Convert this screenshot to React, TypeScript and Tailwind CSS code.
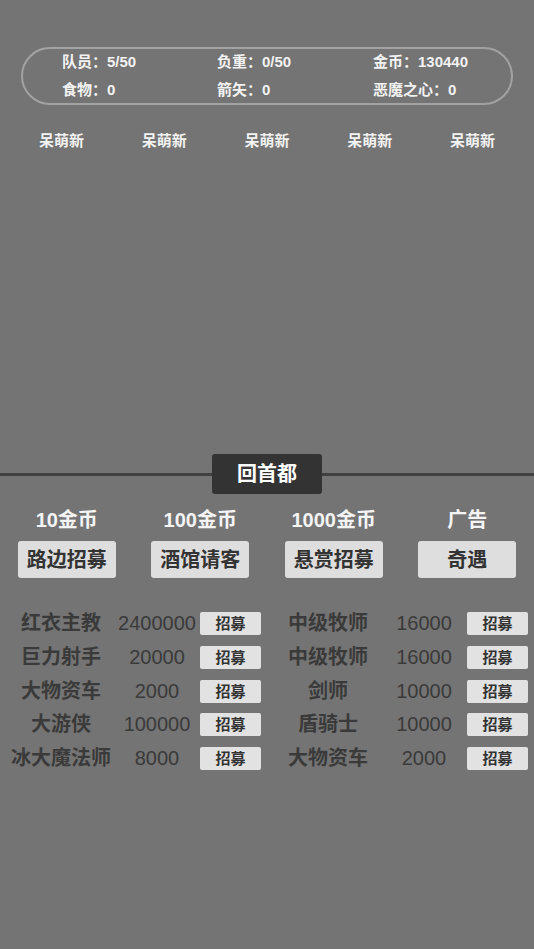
import React from "react";

// 招募页面
const stats = [
  ["队员：5/50", "负重：0/50", "金币：130440"],
  ["食物：0", "箭矢：0", "恶魔之心：0"],
];

const team = ["呆萌新", "呆萌新", "呆萌新", "呆萌新", "呆萌新"];

const modes = [
  { price: "10金币", label: "路边招募" },
  { price: "100金币", label: "酒馆请客" },
  { price: "1000金币", label: "悬赏招募" },
  { price: "广告", label: "奇遇" },
];

const recruits = [
  [
    ["红衣主教", "2400000"],
    ["中级牧师", "16000"],
  ],
  [
    ["巨力射手", "20000"],
    ["中级牧师", "16000"],
  ],
  [
    ["大物资车", "2000"],
    ["剑师", "10000"],
  ],
  [
    ["大游侠", "100000"],
    ["盾骑士", "10000"],
  ],
  [
    ["冰大魔法师", "8000"],
    ["大物资车", "2000"],
  ],
];

const RecruitCell = ({ name, cost }: { name: string; cost: string }) => (
  <div className="grid grid-cols-[122px_70px_8px_61px] items-center h-[23px]">
    <span className="text-center text-[20px] font-semibold text-[#3a3a3a] whitespace-nowrap leading-[23px]">
      {name}
    </span>
    <span className="flex justify-center text-[20px] text-[#3a3a3a] whitespace-nowrap leading-[23px]">
      {cost}
    </span>
    <span />
    <button className="h-[23px] bg-[#e2e2e2] rounded-[2px] text-[15px] font-bold text-[#333] leading-[23px]">
      招募
    </button>
  </div>
);

export default function App() {
  return (
    <div
      className="w-[534px] h-[949px] bg-[#747474] overflow-hidden"
      style={{ fontFamily: '"Liberation Sans", "Noto Sans CJK SC", sans-serif' }}
    >
      {/* 状态栏 */}
      <div className="pt-[47px] px-[21px]">
        <div className="h-[58px] rounded-full border-2 border-[#a2a2a2] pl-[39px] flex flex-col justify-center gap-[8px]">
          {stats.map((row, i) => (
            <div key={i} className="grid grid-cols-[155px_156px_1fr] text-[15px] font-bold text-[#f2f2f2] leading-[20px]">
              {row.map((s) => (
                <span key={s}>{s}</span>
              ))}
            </div>
          ))}
        </div>
      </div>

      {/* 队伍 */}
      <div className="mt-[26px] px-[10px] grid grid-cols-5 text-[15px] font-bold text-[#f2f2f2] leading-[20px]">
        {team.map((t, i) => (
          <span key={i} className="text-center">
            {t}
          </span>
        ))}
      </div>

      {/* 分割线 */}
      <div className="mt-[303px] relative h-[40px] flex items-center justify-center">
        <div className="absolute left-0 right-0 top-[19px] h-[3px] bg-[#404040]" />
        <button className="relative w-[110px] h-[40px] bg-[#333333] rounded-[3px] text-white text-[20px] font-bold">
          回首都
        </button>
      </div>

      {/* 招募方式 */}
      <div className="mt-[13px] grid grid-cols-4">
        {modes.map((m) => (
          <div key={m.label} className="flex flex-col items-center">
            <span className="text-[20px] font-bold text-[#f4f4f4] leading-[26px]">{m.price}</span>
            <button className="mt-[8px] w-[98px] h-[37px] bg-[#dedede] rounded-[3px] text-[20px] font-bold text-[#333]">
              {m.label}
            </button>
          </div>
        ))}
      </div>

      {/* 招募列表 */}
      <div className="mt-[34px] flex flex-col gap-[10.75px]">
        {recruits.map((row, i) => (
          <div key={i} className="grid grid-cols-2">
            {row.map(([name, cost], j) => (
              <RecruitCell key={j} name={name} cost={cost} />
            ))}
          </div>
        ))}
      </div>
    </div>
  );
}
